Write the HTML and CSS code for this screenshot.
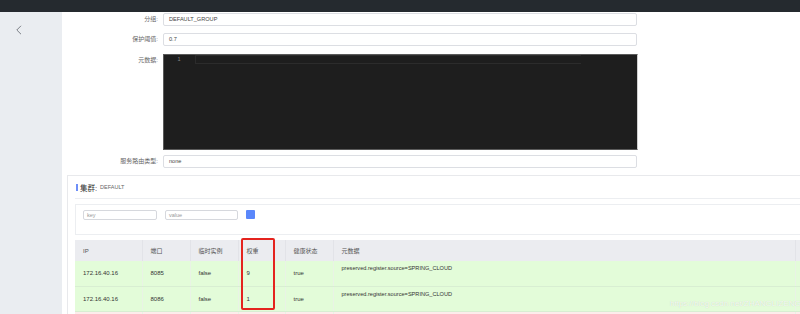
FILE: index.html
```html
<!DOCTYPE html>
<html>
<head>
<meta charset="utf-8">
<link rel="stylesheet" href="styles.css">
</head>
<body>
<div class="topbar"></div>
<div class="layout">
  <aside class="side">
    <svg class="back" width="8" height="10" viewBox="0 0 8 10"><path d="M6 0.8 L1.8 5 L6 9.2" fill="none" stroke="#7b7f86" stroke-width="1"/></svg>
  </aside>
  <main class="main">
    <div class="form">
      <div class="row">
        <label class="label">分组:</label>
        <div class="input">DEFAULT_GROUP</div>
      </div>
      <div class="row">
        <label class="label">保护阈值:</label>
        <div class="input">0.7</div>
      </div>
      <div class="row">
        <label class="label">元数据:</label>
        <div class="editor">
          <div class="gutter">1</div>
          <div class="code"><div class="active-line"></div></div>
        </div>
      </div>
      <div class="row">
        <label class="label">服务路由类型:</label>
        <div class="input">none</div>
      </div>
    </div>

    <section class="cluster">
      <div class="cluster-title">
        <span class="bar"></span>
        <span class="title-main">集群:</span>
        <span class="title-sub">DEFAULT</span>
      </div>
      <div class="filter">
        <div class="small-input key">key</div>
        <div class="small-input val">value</div>
        <div class="add-btn"></div>
      </div>
      <div class="table-wrap">
        <table class="table">
          <thead>
            <tr>
              <th class="c1">IP</th>
              <th class="c2">端口</th>
              <th class="c3">临时实例</th>
              <th class="c4">权重</th>
              <th class="c5">健康状态</th>
              <th class="c6">元数据</th>
              <th class="c7"></th>
            </tr>
          </thead>
          <tbody>
            <tr class="ok">
              <td>172.16.40.16</td>
              <td>8085</td>
              <td>false</td>
              <td>9</td>
              <td>true</td>
              <td class="meta">preserved.register.source=SPRING_CLOUD</td>
              <td></td>
            </tr>
            <tr class="ok">
              <td>172.16.40.16</td>
              <td>8086</td>
              <td>false</td>
              <td>1</td>
              <td>true</td>
              <td class="meta">preserved.register.source=SPRING_CLOUD</td>
              <td></td>
            </tr>
            <tr class="bad">
              <td></td><td></td><td></td><td></td><td></td><td></td><td></td>
            </tr>
          </tbody>
        </table>
        <div class="mark"></div>
        <div class="watermark">https://blog.csdn.net/ZHANGLIZENG</div>
      </div>
    </section>
  </main>
</div>
</body>
</html>
```

FILE: styles.css
```css
html, body {
  margin: 0;
  padding: 0;
  width: 800px;
  height: 314px;
  overflow: hidden;
  background: #fff;
  font-family: "Liberation Sans", Arial, "Noto Sans CJK SC", sans-serif;
}

.topbar {
  height: 12px;
  background: #252a2f;
}

.layout {
  display: flex;
  height: 302px;
}

.side {
  width: 62px;
  flex: none;
  background: #eaedf1;
}

.back {
  display: block;
  margin: 13px 0 0 15px;
}

.main {
  flex: 1;
  min-width: 0;
  overflow: hidden;
  background: #fff;
}

.form {
  display: flex;
  flex-direction: column;
  padding-top: 1px;
}

.row {
  display: flex;
  align-items: flex-start;
  gap: 5px;
  margin-bottom: 7px;
}
.row:nth-child(2) { margin-bottom: 8px; }
.row:nth-child(3) { margin-bottom: 5px; }

.label {
  width: 96px;
  text-align: right;
  font-size: 6px;
  line-height: 13px;
  color: #666;
}

.input {
  width: 462px;
  height: 11px;
  padding: 0 5px;
  border: 1px solid #dcdee3;
  border-radius: 2px;
  font-size: 5.6px;
  line-height: 11px;
  color: #444;
}

.editor {
  width: 473px;
  height: 94px;
  background: #1e1e1e;
  border: 1px solid #5a5a5a;
  border-right-color: #cfcfcf;
  display: flex;
}

.gutter {
  width: 30px;
  padding-right: 1px;
  text-align: center;
  color: #858585;
  font-size: 5.5px;
  line-height: 9px;
}

.code {
  flex: 1;
}

.active-line {
  width: 385px;
  height: 7px;
  border: 1px solid #2c2c2c;
  border-right: none;
}

.cluster {
  margin-left: 5px;
  width: 760px;
  border: 1px solid #e8e9ec;
  border-right: none;
  padding: 0 0 0 7px;
}

.cluster-title {
  display: flex;
  align-items: center;
  height: 22px;
  border-bottom: 1px solid #eceef1;
}

.bar {
  width: 2px;
  height: 7px;
  background: #6e8ff8;
  margin-left: 1px;
  margin-right: 2px;
}

.title-main {
  font-size: 7.5px;
  color: #333;
}

.title-sub {
  font-size: 5.5px;
  color: #666;
  margin-left: 3px;
}

.filter {
  margin-top: 5px;
  height: 31px;
  border: 1px solid #eceef1;
  border-right: none;
  display: flex;
  align-items: flex-start;
  gap: 8px;
  padding: 5px 0 0 7px;
  box-sizing: border-box;
}

.small-input {
  height: 8px;
  border: 1px solid #d6d8dd;
  border-radius: 2px;
  font-size: 5.5px;
  line-height: 8px;
  color: #999;
  padding: 0 3px;
}
.small-input.key { width: 66px; }
.small-input.val { width: 65px; }

.add-btn {
  width: 9px;
  height: 9px;
  background: #5a87fb;
  border-radius: 1px;
}

.table-wrap {
  position: relative;
  margin-top: 5px;
}

.table {
  border-collapse: collapse;
  table-layout: fixed;
  width: 760px;
  font-size: 6px;
  color: #333;
}

.table th,
.table td {
  box-sizing: border-box;
}

.table th {
  height: 21px;
  padding: 0 0 0 8px;
  background: #ebecf0;
  text-align: left;
  font-weight: normal;
  color: #555;
  border-right: 1px solid #e2e3e8;
}

.c1 { width: 67px; }
.c2 { width: 48px; }
.c3 { width: 48px; }
.c4 { width: 47px; }
.c5 { width: 48px; }
.c6 { width: 462px; }

.table td {
  height: 25px;
  padding: 0 0 0 8px;
  border-right: 1px solid #e9f3e5;
  border-bottom: 1px solid #d8eed2;
  white-space: nowrap;
}

.table tr.ok td {
  background: #e3fcd9;
}

.table td.meta {
  vertical-align: top;
  padding-top: 4px;
  font-size: 5.6px;
}

.table tr.bad td {
  background: #fdeceb;
  border-top: 1px solid #f3cfcf;
  height: 20px;
}

.mark {
  position: absolute;
  left: 166px;
  top: -2px;
  width: 30px;
  height: 68px;
  border: 2px solid #e4231e;
  border-radius: 2px;
}

.watermark {
  position: absolute;
  left: 595px;
  top: 59px;
  font-size: 8px;
  color: rgba(255, 255, 255, 0.85);
  text-shadow: 0 0 1px rgba(0, 0, 0, 0.18);
  white-space: nowrap;
}
```
